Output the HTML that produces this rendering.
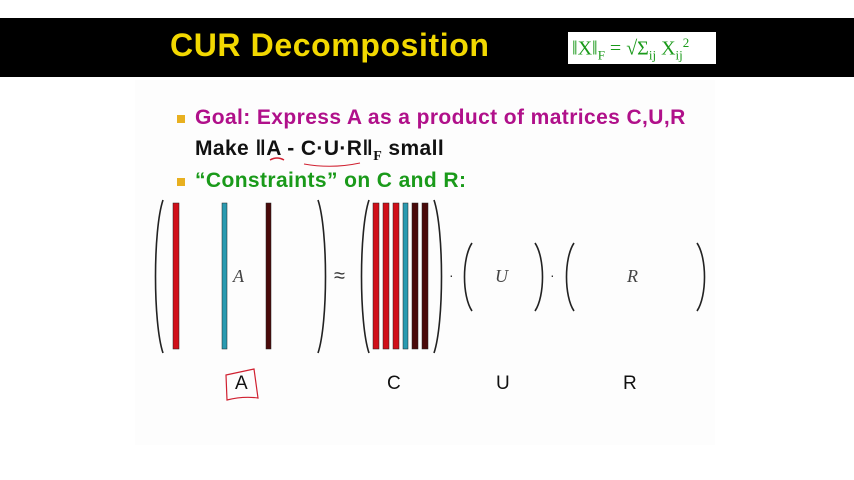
<!DOCTYPE html>
<html><head><style>
body{margin:0;width:854px;height:480px;background:#fff;overflow:hidden;position:relative;font-family:"Liberation Sans",sans-serif}
.bar{position:absolute;left:0;top:18px;width:854px;height:59px;background:#000}
.t{position:absolute;left:170px;top:27px;font:bold 32px "Liberation Sans",sans-serif;color:#f2d800;letter-spacing:0.6px}
.f{position:absolute;left:568px;top:32px;width:148px;height:32px;background:#fff;font:20px "Liberation Serif",serif;color:#1a9a1a;white-space:nowrap}
.line{position:absolute;left:195px;font:bold 21px "Liberation Sans",sans-serif;white-space:nowrap;letter-spacing:0.4px}
.sq{position:absolute;left:177px;width:8px;height:8px;background:#e8b020}
</style></head><body>
<div style="position:absolute;left:135px;top:80px;width:580px;height:365px;background:#fdfdfd"></div>
<div class="bar"></div>
<div class="t">CUR Decomposition</div>
<div class="f"><span style="position:absolute;left:4px;top:3px">‖X‖<sub style="font-size:13px">F</sub> = √Σ<sub style="font-size:13px">ij</sub> X<sub style="font-size:13px">ij</sub><sup style="font-size:13px">2</sup></span></div>
<div class="sq" style="top:115px"></div>
<div class="line" style="top:106px;color:#b0108a">Goal: Express A as a product of matrices C,U,R</div>
<div class="line" style="top:137px;color:#111">Make ‖A - C·U·R‖<sub style="font:bold 14px 'Liberation Serif',serif">F</sub> small</div>
<div class="sq" style="top:178px"></div>
<div class="line" style="top:169px;color:#1a9a1a">“Constraints” on C and R:</div>
<svg width="854" height="480" style="position:absolute;left:0;top:0">
<g fill="none" stroke="#222" stroke-width="1.6">
<path d="M163 200 C153 230 153 323 163 353"/><path d="M318 200 C328 230 328 323 318 353"/>
<path d="M369 200 C359 230 359 323 369 353"/><path d="M434 200 C444 230 444 323 434 353"/>
<path d="M472 243 C462 258 462 296 472 311"/><path d="M535 243 C545 258 545 296 535 311"/>
<path d="M574 243 C564 258 564 296 574 311"/><path d="M697 243 C707 258 707 296 697 311"/>
</g>
<g stroke="#222" stroke-width="0.5">
<rect x="173" y="203" width="6" height="146" fill="#d0101a"/>
<rect x="222" y="203" width="5" height="146" fill="#2a9ab0"/>
<rect x="266" y="203" width="5" height="146" fill="#4a0a0a"/>
<rect x="373" y="203" width="6" height="146" fill="#d0101a"/>
<rect x="383" y="203" width="6" height="146" fill="#d0101a"/>
<rect x="393" y="203" width="6" height="146" fill="#d0101a"/>
<rect x="403" y="203" width="5" height="146" fill="#2a9ab0"/>
<rect x="412" y="203" width="6" height="146" fill="#4a0a0a"/>
<rect x="422" y="203" width="6" height="146" fill="#4a0a0a"/>
</g>
<g font-family="Liberation Serif,serif" font-style="italic" font-size="18" fill="#444">
<text x="233" y="282">A</text><text x="495" y="282">U</text><text x="627" y="282">R</text>
</g>
<text x="334" y="282" font-size="20" fill="#333">≈</text>
<text x="449" y="280" font-size="14" fill="#333">·</text>
<text x="550" y="280" font-size="14" fill="#333">·</text>
<g font-size="19" fill="#111" font-family="Liberation Sans,sans-serif">
<text x="235" y="389">A</text><text x="387" y="389">C</text><text x="496" y="389">U</text><text x="623" y="389">R</text>
</g>
<path d="M226 375 L254 369 L258 398 Q243 396 227 400 Z" fill="none" stroke="#d02030" stroke-width="1.2"/>
<path d="M270 160 Q277 156 284 160" fill="none" stroke="#d02030" stroke-width="1.5"/>
<path d="M304 164 Q332 169 360 163" fill="none" stroke="#d02030" stroke-width="1"/>
</svg>
</body></html>
